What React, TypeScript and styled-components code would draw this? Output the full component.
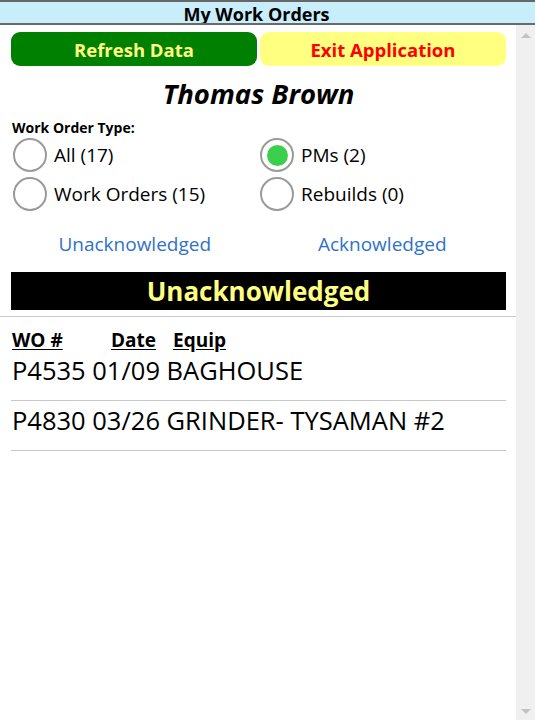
import React from "react";
import styled, { createGlobalStyle } from "styled-components";

const Global = createGlobalStyle`
  html, body { margin: 0; padding: 0; background: #fff; }
  body { font-family: "Open Sans", "Noto Sans", sans-serif; color: #000; overflow: hidden; }
`;

const Page = styled.div`
  width: 535px;
  height: 720px;
  display: flex;
  flex-direction: column;
`;

const TitleBar = styled.div`
  height: 21px;
  background: #c8eefc;
  border-top: 2px solid #666;
  border-bottom: 2px solid #6a6a6a;
  display: flex;
  justify-content: center;
  align-items: flex-start;
  padding-right: 22px;
  overflow: hidden;
`;

const Title = styled.div`
  font-weight: 700;
  font-size: 18px;
  line-height: 24px;
`;

const Body = styled.div`
  flex: 1;
  display: flex;
  min-height: 0;
`;

const Content = styled.div`
  width: 516px;
  display: flex;
  flex-direction: column;
`;

const Scrollbar = styled.div`
  width: 19px;
  background: #f0f0f0;
  display: flex;
  flex-direction: column;
  justify-content: space-between;
  align-items: center;
  padding: 8px 0 6px;
`;

const Arrow = styled.div<{ $down?: boolean }>`
  width: 0;
  height: 0;
  border-left: 5px solid transparent;
  border-right: 5px solid transparent;
  ${(p) => (p.$down ? "border-top: 5px solid #c2c2c2;" : "border-bottom: 5px solid #c2c2c2;")}
`;

const Section = styled.div`
  padding: 0 10px 0 11px;
`;

const ButtonRow = styled.div`
  display: grid;
  grid-template-columns: 1fr 1fr;
  gap: 3px;
  margin-top: 7px;
`;

const Button = styled.div<{ $bg: string; $fg: string }>`
  height: 34px;
  border-radius: 9px;
  background: ${(p) => p.$bg};
  color: ${(p) => p.$fg};
  font-weight: 700;
  font-size: 18.5px;
  display: flex;
  align-items: center;
  justify-content: center;
  padding-top: 1px;
  box-sizing: border-box;
`;

const Name = styled.div`
  text-align: center;
  font-weight: 700;
  font-style: italic;
  font-size: 27.5px;
  line-height: 32px;
  margin-top: 12px;
`;

const TypeLabel = styled.div`
  font-weight: 700;
  font-size: 14px;
  line-height: 18px;
  margin-top: 9px;
  padding-left: 1px;
`;

const RadioGrid = styled.div`
  display: grid;
  grid-template-columns: 247px 1fr;
  row-gap: 5px;
  margin-top: 1px;
  padding-left: 2px;
`;

const RadioItem = styled.div`
  display: flex;
  align-items: center;
  gap: 7px;
  font-size: 19px;
  height: 34px;
`;

const Circle = styled.div<{ $checked?: boolean }>`
  width: 30px;
  height: 30px;
  border: 2px solid #9a9a9a;
  border-radius: 50%;
  background: #fff;
  display: flex;
  align-items: center;
  justify-content: center;
  flex-shrink: 0;
  &::after {
    content: "";
    width: 21px;
    height: 21px;
    border-radius: 50%;
    background: ${(p) => (p.$checked ? "#3ccf4e" : "transparent")};
  }
`;

const LinkRow = styled.div`
  display: grid;
  grid-template-columns: 1fr 1fr;
  margin-top: 21px;
`;

const LinkText = styled.div`
  color: #2f72c9;
  font-size: 19px;
  line-height: 24px;
  text-align: center;
`;

const Banner = styled.div`
  margin-top: 16px;
  height: 38px;
  background: #000;
  color: #ffff80;
  font-weight: 700;
  font-size: 26px;
  display: flex;
  align-items: center;
  justify-content: center;
`;

const Separator = styled.div`
  height: 1px;
  background: #c8c8c8;
  margin-top: 6px;
`;

const HeaderRow = styled.div`
  display: flex;
  margin-top: 12px;
  font-weight: 700;
  font-size: 19px;
  line-height: 22px;
  padding-left: 1px;
`;

const HeaderCell = styled.span<{ $w?: number }>`
  text-decoration: underline;
  text-underline-offset: 2px;
  ${(p) => (p.$w ? `width: ${p.$w}px;` : "")}
`;

const Row = styled.div`
  font-size: 25.5px;
  line-height: 30px;
  padding: 4px 0 15px 1px;
  border-bottom: 1px solid #c8c8c8;
`;

const rows = [
  "P4535 01/09 BAGHOUSE",
  "P4830 03/26 GRINDER- TYSAMAN #2",
];

export default function App() {
  return (
    <Page>
      <Global />
      <TitleBar>
        <Title>My Work Orders</Title>
      </TitleBar>
      <Body>
        <Content>
          <Section>
            <ButtonRow>
              <Button $bg="#008000" $fg="#ffff80">Refresh Data</Button>
              <Button $bg="#ffff80" $fg="#ff0000">Exit Application</Button>
            </ButtonRow>
            <Name>Thomas Brown</Name>
            <TypeLabel>Work Order Type:</TypeLabel>
            <RadioGrid>
              <RadioItem><Circle />All (17)</RadioItem>
              <RadioItem><Circle $checked />PMs (2)</RadioItem>
              <RadioItem><Circle />Work Orders (15)</RadioItem>
              <RadioItem><Circle />Rebuilds (0)</RadioItem>
            </RadioGrid>
            <LinkRow>
              <LinkText>Unacknowledged</LinkText>
              <LinkText>Acknowledged</LinkText>
            </LinkRow>
            <Banner>Unacknowledged</Banner>
          </Section>
          <Separator />
          <Section>
            <HeaderRow>
              <HeaderCell $w={99}>WO #</HeaderCell>
              <HeaderCell $w={62}>Date</HeaderCell>
              <HeaderCell>Equip</HeaderCell>
            </HeaderRow>
            {rows.map((r) => (
              <Row key={r}>{r}</Row>
            ))}
          </Section>
        </Content>
        <Scrollbar>
          <Arrow />
          <Arrow $down />
        </Scrollbar>
      </Body>
    </Page>
  );
}
